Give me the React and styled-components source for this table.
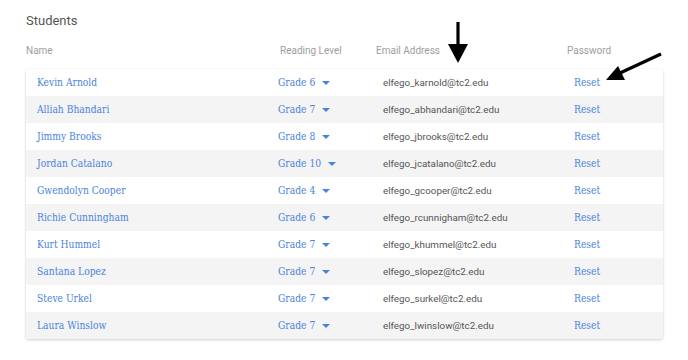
import styled, { createGlobalStyle } from "styled-components";

const students = [
  { name: "Kevin Arnold", grade: 6, email: "elfego_karnold@tc2.edu" },
  { name: "Alliah Bhandari", grade: 7, email: "elfego_abhandari@tc2.edu" },
  { name: "Jimmy Brooks", grade: 8, email: "elfego_jbrooks@tc2.edu" },
  { name: "Jordan Catalano", grade: 10, email: "elfego_jcatalano@tc2.edu" },
  { name: "Gwendolyn Cooper", grade: 4, email: "elfego_gcooper@tc2.edu" },
  { name: "Richie Cunningham", grade: 6, email: "elfego_rcunnigham@tc2.edu" },
  { name: "Kurt Hummel", grade: 7, email: "elfego_khummel@tc2.edu" },
  { name: "Santana Lopez", grade: 7, email: "elfego_slopez@tc2.edu" },
  { name: "Steve Urkel", grade: 7, email: "elfego_surkel@tc2.edu" },
  { name: "Laura Winslow", grade: 7, email: "elfego_lwinslow@tc2.edu" },
];

export default function App() {
  return (
    <Page>
      <GlobalStyle />
      <Title>Students</Title>
      <HeaderRow>
        <span>Name</span>
        <span>Reading Level</span>
        <span>Email Address</span>
        <span>Password</span>
      </HeaderRow>
      <Card>
        {students.map((s, i) => (
          <Row key={s.name} $shaded={i % 2 === 1}>
            <Link>{s.name}</Link>
            <Grade>
              Grade {s.grade}
              <Caret />
            </Grade>
            <Email>{s.email}</Email>
            <Link>Reset</Link>
          </Row>
        ))}
      </Card>

      <Arrow style={{ left: 440, top: 18 }} width="36" height="48" viewBox="0 0 36 48">
        <line x1="18" y1="4" x2="18" y2="30" stroke="#000" strokeWidth="3.2" />
        <polygon points="8,26 28,26 18,45" fill="#000" />
      </Arrow>
      <Arrow style={{ left: 600, top: 48 }} width="68" height="40" viewBox="0 0 68 40">
        <line x1="61" y1="6" x2="20" y2="25" stroke="#000" strokeWidth="3.2" />
        <polygon points="6,32 18,18 25,32" fill="#000" />
      </Arrow>
    </Page>
  );
}

const GlobalStyle = createGlobalStyle`
  body {
    margin: 0;
    background: #ffffff;
    font-family: Roboto, "Liberation Sans", sans-serif;
  }
`;

const Page = styled.div`
  position: relative;
  width: 688px;
  height: 360px;
  padding: 12px 25px 0 26px;
  box-sizing: border-box;
  overflow: hidden;
`;

const Title = styled.h2`
  margin: 0;
  font-size: 13px;
  font-weight: 400;
  color: #555;
  line-height: 18px;
`;

const HeaderRow = styled.div`
  display: grid;
  grid-template-columns: 254px 96px 191px 1fr;
  margin-top: 8px;
  height: 24px;
  align-items: center;
  font-size: 10px;
  color: #9e9e9e;
`;

const Card = styled.div`
  margin-top: 7px;
  border-radius: 3px;
  background: #fff;
  box-shadow: 0 1px 3px rgba(0, 0, 0, 0.18), 0 0 1px rgba(0, 0, 0, 0.08);
  overflow: hidden;
`;

const Row = styled.div`
  display: grid;
  grid-template-columns: 241px 105px 191px 1fr;
  align-items: center;
  height: 27px;
  padding-left: 11px;
  background: ${(p) => (p.$shaded ? "#f4f4f4" : "#ffffff")};
`;

const Link = styled.span`
  font-family: "DejaVu Serif Condensed", "DejaVu Serif", serif;
  font-size: 10.2px;
  color: #4a83dc;
  white-space: nowrap;
`;

const Grade = styled(Link)`
  display: flex;
  align-items: center;
  gap: 7px;
`;

const Caret = styled.span`
  width: 0;
  height: 0;
  border-left: 4px solid transparent;
  border-right: 4px solid transparent;
  border-top: 4.5px solid #4a83dc;
`;

const Email = styled.span`
  font-size: 9.8px;
  color: #555;
  white-space: nowrap;
`;

const Arrow = styled.svg`
  position: absolute;
`;
